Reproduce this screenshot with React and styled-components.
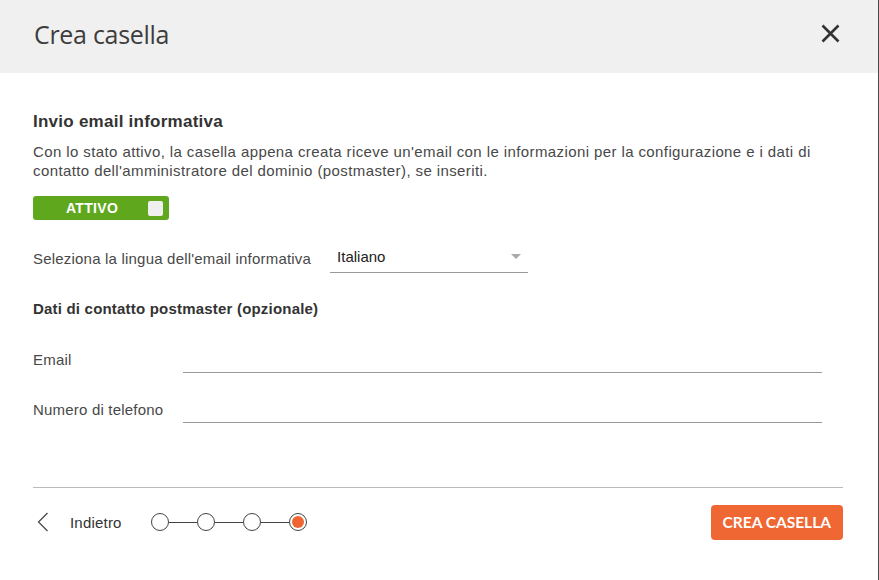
import styled, { createGlobalStyle } from "styled-components";

const GlobalStyle = createGlobalStyle`
  body {
    margin: 0;
    background: #fff;
    font-family: "Liberation Sans", Arial, sans-serif;
  }
`;

const Modal = styled.div`
  width: 878px;
  height: 580px;
  background: #fff;
  border-right: 1px solid #4a4a4a;
  display: flex;
  flex-direction: column;
`;

const Header = styled.div`
  height: 73px;
  box-sizing: border-box;
  padding: 0 38px 6px 34px;
  background: #f0f0f0;
  display: flex;
  align-items: center;
  justify-content: space-between;
  flex-shrink: 0;

  h1 {
    margin: 0;
    font-family: "Open Sans", sans-serif;
    font-weight: 400;
    font-size: 25px;
    color: #3d3d3d;
    letter-spacing: -0.3px;
  }
`;

const CloseButton = styled.button`
  border: 0;
  background: none;
  padding: 0;
  display: flex;
  cursor: pointer;
`;

const Body = styled.div`
  padding: 39px 35px 0 33px;
  flex: 1;
  display: flex;
  flex-direction: column;
`;

const SectionTitle = styled.h2`
  margin: 0 0 10px;
  font-size: 17px;
  line-height: 20px;
  font-weight: 700;
  letter-spacing: 0.25px;
  color: #333;
`;

const Text = styled.p`
  margin: 0;
  font-size: 15px;
  line-height: 19px;
  letter-spacing: 0.4px;
  color: #484848;
`;

const Toggle = styled.button`
  margin-top: 16px;
  width: 136px;
  height: 24px;
  border: 0;
  border-radius: 3px;
  background: #5fa81e;
  display: flex;
  align-items: center;
  justify-content: space-between;
  padding: 0 6px 0 33px;
  cursor: pointer;
  font-family: "Liberation Sans", Arial, sans-serif;
  font-weight: 700;
  font-size: 14px;
  letter-spacing: 0.3px;
  color: #fff;

  span {
    width: 15px;
    height: 15px;
    border-radius: 2px;
    background: #efefef;
  }
`;

const LangRow = styled.div`
  margin-top: 23px;
  display: flex;
  align-items: center;
  gap: 19px;
`;

const Label = styled.label`
  font-size: 15px;
  letter-spacing: 0.2px;
  color: #484848;
  width: ${(p) => (p.$w ? `${p.$w}px` : "auto")};
  flex-shrink: 0;
`;

const Select = styled.div`
  width: 198px;
  height: 30px;
  border-bottom: 1px solid #999;
  display: flex;
  align-items: center;
  justify-content: space-between;
  padding: 0 7px 2px 7px;
  box-sizing: border-box;
  font-size: 15px;
  color: #222;

  &::after {
    content: "";
    border-left: 5px solid transparent;
    border-right: 5px solid transparent;
    border-top: 5px solid #aaa;
  }
`;

const SubTitle = styled.h3`
  margin: 27px 0 0;
  font-size: 15px;
  line-height: 18px;
  font-weight: 700;
  letter-spacing: 0.2px;
  color: #333;
`;

const FieldRow = styled.div`
  display: flex;
  align-items: center;
  margin-top: ${(p) => p.$top}px;
  padding-right: 21px;
`;

const Input = styled.input`
  flex: 1;
  height: 27px;
  border: 0;
  border-bottom: 1px solid #999;
  outline: none;
  font-size: 15px;
  padding: 0;
  background: transparent;
`;

const Divider = styled.hr`
  margin: 64px 0 0;
  border: 0;
  border-top: 1px solid #bbb;
`;

const Footer = styled.div`
  height: 68px;
  display: flex;
  align-items: center;
  justify-content: space-between;
`;

const Back = styled.button`
  border: 0;
  background: none;
  padding: 0 0 0 4px;
  display: flex;
  align-items: center;
  gap: 21px;
  font-family: "Liberation Sans", Arial, sans-serif;
  font-size: 15px;
  letter-spacing: 0.2px;
  color: #333;
  cursor: pointer;
`;

const Left = styled.div`
  display: flex;
  align-items: center;
  gap: 29px;
`;

const Steps = styled.div`
  display: flex;
  align-items: center;
`;

const Step = styled.span`
  width: 18px;
  height: 18px;
  box-sizing: border-box;
  border: 1px solid #444;
  border-radius: 50%;
  display: flex;
  align-items: center;
  justify-content: center;

  &::after {
    content: "";
    display: ${(p) => (p.$active ? "block" : "none")};
    width: 12px;
    height: 12px;
    border-radius: 50%;
    background: #ee6531;
  }
`;

const Connector = styled.span`
  width: 28px;
  height: 1px;
  background: #444;
`;

const Primary = styled.button`
  height: 35px;
  padding: 0 12px;
  border: 0;
  border-radius: 4px;
  background: #ef6833;
  color: #fff;
  font-family: Lato, sans-serif;
  font-weight: 700;
  font-size: 15.5px;
  cursor: pointer;
`;

export default function App() {
  const steps = [false, false, false, true];
  return (
    <>
      <GlobalStyle />
      <Modal>
        <Header>
          <h1>Crea casella</h1>
          <CloseButton aria-label="Chiudi">
            <svg width="19" height="19" viewBox="0 0 19 19">
              <path d="M1.5 1.5 L17.5 17.5 M17.5 1.5 L1.5 17.5" stroke="#333" strokeWidth="2.6" />
            </svg>
          </CloseButton>
        </Header>
        <Body>
          <SectionTitle>Invio email informativa</SectionTitle>
          <Text>
            Con lo stato attivo, la casella appena creata riceve un'email con le informazioni per la configurazione e i dati di
            contatto dell'amministratore del dominio (postmaster), se inseriti.
          </Text>
          <Toggle>
            ATTIVO
            <span />
          </Toggle>
          <LangRow>
            <Label>Seleziona la lingua dell'email informativa</Label>
            <Select>Italiano</Select>
          </LangRow>
          <SubTitle>Dati di contatto postmaster (opzionale)</SubTitle>
          <FieldRow $top={27}>
            <Label $w={150}>Email</Label>
            <Input />
          </FieldRow>
          <FieldRow $top={22}>
            <Label $w={150}>Numero di telefono</Label>
            <Input />
          </FieldRow>
          <Divider />
          <Footer>
            <Left>
              <Back>
                <svg width="12" height="20" viewBox="0 0 12 20">
                  <polyline points="10.5,1 1.5,10 10.5,19" fill="none" stroke="#444" strokeWidth="1.2" />
                </svg>
                Indietro
              </Back>
              <Steps>
                {steps.map((active, i) => (
                  <Steps key={i}>
                    {i > 0 && <Connector />}
                    <Step $active={active} />
                  </Steps>
                ))}
              </Steps>
            </Left>
            <Primary>CREA CASELLA</Primary>
          </Footer>
        </Body>
      </Modal>
    </>
  );
}
